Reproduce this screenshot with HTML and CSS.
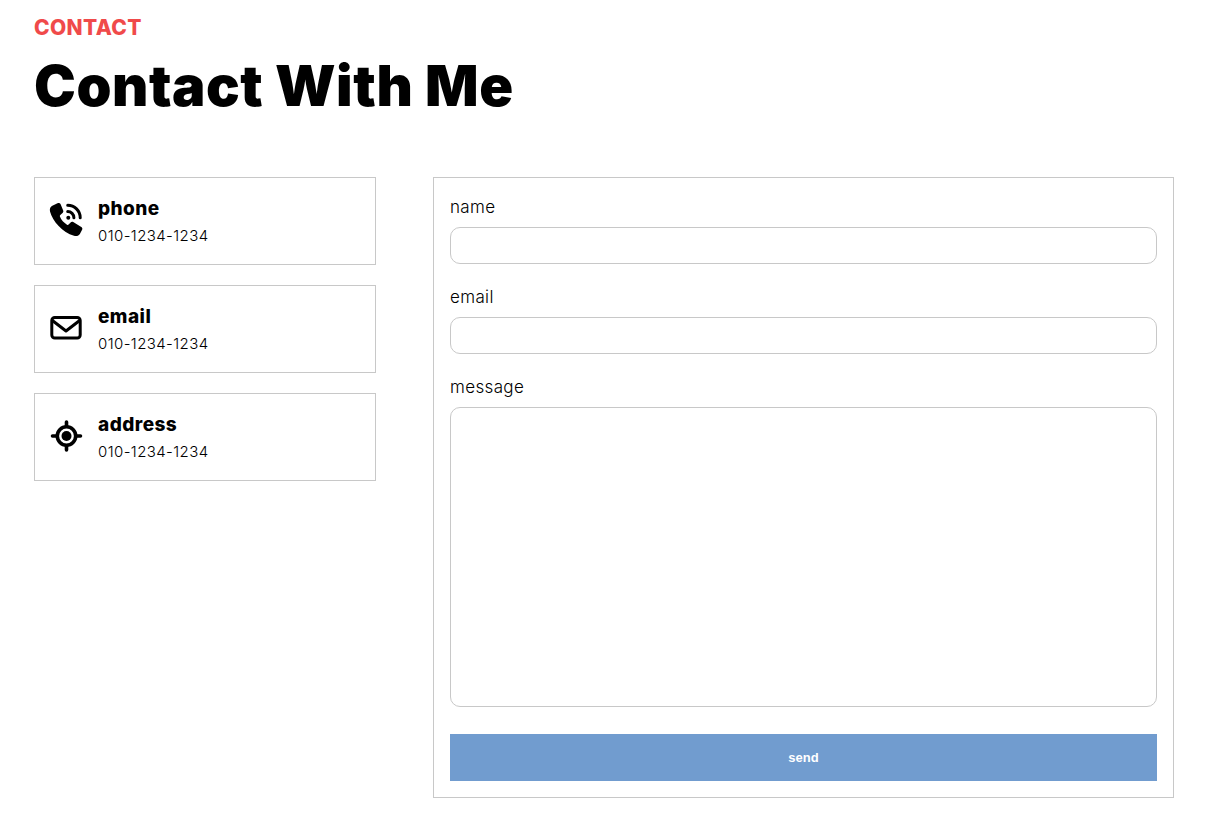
FILE: index.html
```html
<!DOCTYPE html>
<html lang="en">
<head>
<meta charset="utf-8">
<title>Contact</title>
<link rel="stylesheet" href="styles.css">
</head>
<body>
<section class="contact">
  <p class="eyebrow">CONTACT</p>
  <h1 class="title">Contact With Me</h1>
  <div class="columns">
    <div class="info">
      <div class="card">
        <svg class="icon" viewBox="0 0 32 32" aria-hidden="true">
          <path class="fill" d="M7.500 .2C8.800-.3 10-.1 10.500 1L13.200 7.500C13.600 8.400 13.300 9.400 12.500 10L10.300 12C9.800 12.400 9.700 13 9.900 13.500C11.100 16.800 14 19.800 17 21.800C17.600 22.100 18.200 22 18.600 21.500L20.600 19.400C21.300 18.600 22.300 18.500 23.200 19L31.300 24C32.300 24.600 32.700 25.800 32.100 26.800L30 30.800C28.800 32.900 26.500 33.500 24 32.800C12.500 29.400 2.700 18.500 0 8.500C-.5 6 .2 4 2.300 2.800Z"/>
          <path class="line" d="M17.700 8.500A6.200 6.200 0 0 1 23.900 14.700M17.700 2.200A12.500 12.500 0 0 1 30.200 14.700"/>
          <circle class="fill" cx="18.300" cy="14.700" r="2"/>
        </svg>
        <div class="card-text">
          <h2 class="card-title">phone</h2>
          <p class="card-value">010-1234-1234</p>
        </div>
      </div>
      <div class="card">
        <svg class="icon" viewBox="0 0 32 32" aria-hidden="true">
          <rect class="line" x="1.800" y="6.500" width="28.400" height="20.500" rx="3"/>
          <path class="line" d="M3 10 16 20 29 10"/>
        </svg>
        <div class="card-text">
          <h2 class="card-title">email</h2>
          <p class="card-value">010-1234-1234</p>
        </div>
      </div>
      <div class="card">
        <svg class="icon" viewBox="0 0 32 32" aria-hidden="true">
          <circle class="line thick" cx="16.500" cy="17" r="9.200"/>
          <circle class="fill" cx="16.500" cy="17" r="5"/>
          <path class="line thick" d="M16.500 3V7M16.500 27v4M2.500 17H6.500M26.500 17H30.500"/>
        </svg>
        <div class="card-text">
          <h2 class="card-title">address</h2>
          <p class="card-value">010-1234-1234</p>
        </div>
      </div>
    </div>
    <form class="form">
      <label class="field-label" for="name">name</label>
      <input class="input" id="name" type="text">
      <label class="field-label" for="email">email</label>
      <input class="input" id="email" type="text">
      <label class="field-label" for="message">message</label>
      <textarea class="input textarea" id="message"></textarea>
      <button class="send" type="button">send</button>
    </form>
  </div>
</section>
</body>
</html>
```
FILE: styles.css
```css
* { box-sizing: border-box; }
html, body { margin: 0; background: #fff; }
body { font-family: Inter, "Liberation Sans", sans-serif; color: #000; }
.contact { width: 1140px; margin-left: 34px; padding-top: 14px; padding-bottom: 31px; }
.eyebrow { margin: 0; font-size: 21px; line-height: 28px; font-weight: 800; letter-spacing: 0.35px; color: #f04a4a; }
.title { margin: 8px 0 0; font-size: 56px; line-height: 72px; font-weight: 900; letter-spacing: 0.55px; }
.columns { display: flex; justify-content: space-between; align-items: flex-start; margin-top: 55px; }
.info { width: 342px; display: flex; flex-direction: column; gap: 20px; }
.card { height: 88px; border: 1px solid #c8c8c8; display: flex; align-items: center; gap: 16px; padding-left: 15px; }
.icon { width: 32px; height: 32px; flex: none; margin-bottom: 4px; overflow: visible; }
.fill { fill: #000; }
.line { fill: none; stroke: #000; stroke-width: 3; stroke-linecap: round; stroke-linejoin: round; }
.thick { stroke-width: 3.6; }
.card-text { margin-top: 2px; }
.card-title { margin: 0; font-size: 19px; line-height: 26px; font-weight: 800; letter-spacing: 0.45px; }
.card-value { margin: 1px 0 0; font-size: 15px; line-height: 26px; font-weight: 300; letter-spacing: 0.4px; }
.form { width: 741px; height: 621px; border: 1px solid #c8c8c8; padding: 16px; display: flex; flex-direction: column; }
.field-label { font-size: 17px; line-height: 24px; font-weight: 300; letter-spacing: 0.35px; padding-top: 1px; margin-bottom: 8px; box-sizing: content-box; }
.input { display: block; width: 100%; height: 37px; border: 1px solid #c8c8c8; border-radius: 10px; margin-bottom: 20px; background: #fff; padding: 0; }
.textarea { height: 300px; margin-bottom: 27px; resize: none; }
.send { width: 100%; height: 47px; border: 0; background: #719ccf; color: #fff; font-family: "Liberation Sans", Arial, sans-serif; font-size: 13px; font-weight: 700; padding: 0; }
```
